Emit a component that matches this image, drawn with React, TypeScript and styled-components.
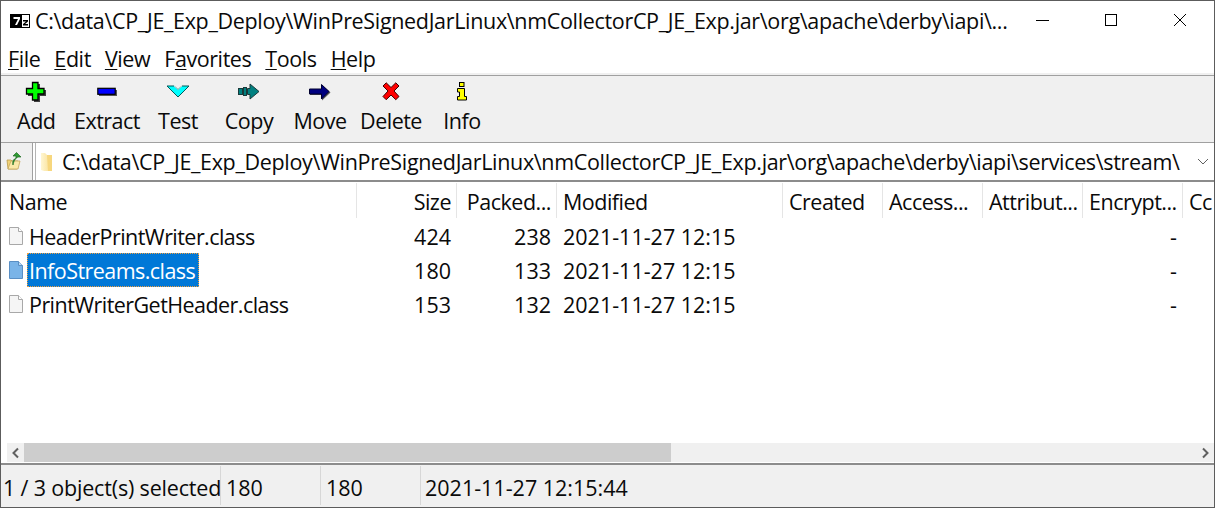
import React from "react";
import styled, { createGlobalStyle } from "styled-components";

const Global = createGlobalStyle`
  html, body { margin: 0; padding: 0; background: #fff; }
  body { font-family: "Open Sans", "Noto Sans", sans-serif; font-size: 21.5px; color: #0a0a0a; overflow: hidden; }
`;

const Window = styled.div`
  width: 1215px; height: 508px; box-sizing: border-box; overflow: hidden;
  border: 1px solid #5c5c5c;
  display: flex; flex-direction: column; background: #fff;
  letter-spacing: -0.33px;
`;
const TitleBar = styled.div`
  height: 39px; flex: none; display: flex; align-items: center; padding-left: 9px;
`;
const TitleText = styled.div`
  flex: 1; margin-left: 5px; white-space: nowrap; overflow: hidden; line-height: 26px; padding-top: 1px;
`;
const WinButton = styled.div`
  width: 69px; height: 39px; display: flex; align-items: flex-start; justify-content: center; padding-top: 12px; box-sizing: border-box;
`;
const MenuBar = styled.div`
  height: 33px; flex: none; display: flex; align-items: center; padding-left: 7px; gap: 14px; padding-top: 4px; box-sizing: border-box; letter-spacing: -0.42px;
`;
const MenuItem = styled.span`
  line-height: 26px; white-space: nowrap;
  u { text-underline-offset: 2px; text-decoration-thickness: 1px; }
`;
const Strip = styled.div`
  height: 2px; flex: none; background: #f0f0f0; border-bottom: 1px solid #a0a0a0;
`;
const Toolbar = styled.div`
  height: 66px; flex: none; background: #f0f0f0; border-bottom: 1px solid #a0a0a0; display: flex;
`;
const ToolButton = styled.div`
  width: 71px; display: flex; flex-direction: column; align-items: center; padding-top: 5px; box-sizing: border-box;
  &:first-child { width: 70.5px; }
`;
const ToolIcon = styled.div`
  height: 22px; display: flex; align-items: center; justify-content: center;
`;
const ToolLabel = styled.div`
  line-height: 26px; margin-top: 5px; white-space: nowrap; letter-spacing: -0.5px;
`;
const AddressBar = styled.div`
  height: 37px; flex: none; display: flex; background: #fff; border-bottom: 2px solid #8c8c8c;
`;
const UpButton = styled.div`
  width: 32px; flex: none; background: #f0f0f0; border-right: 1px solid #a0a0a0; box-sizing: border-box;
  display: flex; align-items: center; padding-left: 5px; height: 37px;
`;
const AddressField = styled.div`
  flex: 1; display: flex; align-items: center; min-width: 0; margin-left: 2px; border-left: 1px solid #b4b4b4; padding-left: 4px;
`;
const AddressText = styled.div`
  margin-left: 9px; white-space: nowrap; line-height: 26px; flex: 1; padding-top: 1px;
`;
const ComboArrow = styled.div`
  width: 24px; flex: none; display: flex; justify-content: center; margin-right: -1px;
`;
const List = styled.div`
  flex: 1; min-height: 0; display: flex; flex-direction: column; overflow: hidden;
`;
const COLS = "356px 100px 100px 226px 100px 100px 100px 100px 100px";
const HeaderRow = styled.div`
  display: grid; grid-template-columns: ${COLS}; height: 36px; flex: none; width: 1300px; padding-top: 1px; box-sizing: border-box;
`;
const HeaderCell = styled.div<{ $right?: boolean }>`
  border-right: 1px solid #e5e5e5; box-sizing: border-box; white-space: nowrap; overflow: hidden; line-height: 37px;
  padding: 0 5px 0 6px; height: 35px; letter-spacing: -0.5px;
  text-align: ${(p) => (p.$right ? "right" : "left")};
  &:first-child { padding-left: 8px; }
`;
const Rows = styled.div`
  flex: 1; padding-top: 1px; min-height: 0;
`;
const Row = styled.div`
  display: grid; grid-template-columns: ${COLS}; height: 34px; width: 1300px; align-items: center; white-space: nowrap;
`;
const NameCell = styled.div`
  display: flex; align-items: center; padding-left: 7px;
`;
const FileName = styled.span<{ $selected?: boolean }>`
  margin-left: 3px; height: 34px; line-height: 35px; box-sizing: border-box; padding: 0 4px 0 2px; letter-spacing: -0.55px;
  background: ${(p) => (p.$selected ? "#0078d7" : "transparent")};
  color: ${(p) => (p.$selected ? "#fff" : "#0a0a0a")};
  outline: ${(p) => (p.$selected ? "1px dotted #f0a040" : "none")};
  outline-offset: -1px;
`;
const Cell = styled.div<{ $right?: boolean }>`
  padding: 0 6px; letter-spacing: 0; text-align: ${(p) => (p.$right ? "right" : "left")}; box-sizing: border-box; line-height: 35px; height: 34px;
`;
const ScrollBar = styled.div`
  height: 19px; flex: none; display: flex; background: #f0f0f0; margin-left: 6px; margin-bottom: 1px;
`;
const ScrollButton = styled.div`
  width: 17px; flex: none; display: flex; align-items: center; justify-content: center;
`;
const ScrollTrack = styled.div`
  flex: 1; min-width: 0; display: flex;
`;
const ScrollThumb = styled.div`
  width: 647px; background: #cdcdcd;
`;
const StatusBar = styled.div`
  height: 44px; flex: none; display: flex; background: #f0f0f0; border-top: 2px solid #8c8c8c; box-sizing: border-box;
`;
const StatusPane = styled.div<{ $w: number }>`
  width: ${(p) => p.$w}px; flex: none; box-sizing: border-box; border-right: 1px solid #d7d7d7; margin-top: 1px; height: 39px; letter-spacing: 0;
  padding-left: 5px; line-height: 43px; white-space: nowrap; overflow: hidden;
  &:first-child { padding-left: 2px; letter-spacing: -0.17px; }
  &:last-child { border-right: 0; padding-left: 4px; }
`;

const AddIcon = () => (
  <svg width="22" height="22" viewBox="0 0 22 22">
    <path d="M9 3h6v6h6v6h-6v6H9v-6H3V9h6z" fill="#404040" />
    <path d="M7.500 1.500h5.500v6h6v5.500h-6v6H7.500v-6h-6V7.500h6z" fill="#00ff00" stroke="#000" strokeWidth="1.3" />
  </svg>
);
const ExtractIcon = () => (
  <svg width="20" height="22" viewBox="0 0 20 22">
    <rect x="2" y="9" width="18" height="6" fill="#555" />
    <rect x="0.800" y="7.300" width="17.400" height="6" fill="#0000ff" stroke="#000" strokeWidth="1.2" />
  </svg>
);
const TestIcon = () => (
  <svg width="24" height="22" viewBox="0 0 24 22">
    <path d="M1 5h7l4 3.500L16 5h7l-11 11z" fill="#00ffff" stroke="#005a5a" strokeWidth="1" />
    <path d="M8 5l4 3.500L16 5" fill="none" stroke="#e0ffff" strokeWidth="0.8" />
  </svg>
);
const CopyIcon = () => (
  <svg width="22" height="22" viewBox="0 0 22 22">
    <rect x="0.500" y="7.500" width="4" height="6" fill="#008080" stroke="#1a3a3a" />
    <rect x="5.500" y="6.500" width="3" height="8" fill="#008080" stroke="#1a3a3a" />
    <path d="M9.500 7.500h2.500V3l9 7.500-9 7.500v-4.500H9.500z" fill="#008080" stroke="#1a3a3a" />
  </svg>
);
const MoveIcon = () => (
  <svg width="22" height="22" viewBox="0 0 22 22">
    <path d="M1 9h12V4l8.500 7.500-8.500 8v-5.500H1z" fill="#555" />
    <path d="M0.500 8h12V3.500L20 10.500l-7.500 7.500v-5h-12z" fill="#000080" stroke="#000030" />
  </svg>
);
const DeleteIcon = () => (
  <svg width="20" height="22" viewBox="0 0 20 22">
    <path d="M2 5l3.200-3.200L10 6.500l4.800-4.700L18 5l-5 5 5 5.500-3.200 3.200L10 14l-4.800 4.700L2 15.500 7 10z" fill="#ff0000" stroke="#400000" strokeWidth="1" />
  </svg>
);
const InfoIcon = () => (
  <svg width="12" height="22" viewBox="0 0 12 22">
    <rect x="3.500" y="1.500" width="4.500" height="4" fill="#ffff00" stroke="#000" />
    <path d="M1.500 7.500h7v8h2v3.500h-9v-3.500h2v-4.500h-2z" fill="#ffff00" stroke="#000" />
  </svg>
);
const LogoIcon = () => (
  <svg width="20" height="14" viewBox="0 0 20 14">
    <rect x="0" y="0" width="20" height="14" fill="#000" />
    <rect x="1" y="1" width="18" height="12" fill="#fff" />
    <rect x="1" y="1" width="11" height="12" fill="#000" />
    <path d="M3.500 3h6.500v2l-3 6H5l3-6H3.500z" fill="#fff" />
    <path d="M13 6h5v1.500l-3 2.500h3v1.500h-5V10l3-2.500h-3z" fill="#000" />
  </svg>
);
const UpIcon = () => (
  <svg width="16" height="19" viewBox="0 0 16 19">
    <path d="M1 8h4l1 1h6l-1 8H2z" fill="#f2d377" stroke="#b99a4a" strokeWidth="0.8" />
    <path d="M3 14l2-5h9l-2 8H2z" fill="#fbe9a9" stroke="#c6a75a" strokeWidth="0.8" />
    <path d="M7 13c-1-4 1-6 3-7V4l-3 0L10.500 0.500 15 5h-3c-2 1-4 3-5 8z" fill="#2f9a33" stroke="#1c6b20" strokeWidth="0.7" />
  </svg>
);
const FolderIcon = () => (
  <svg width="13" height="20" viewBox="0 0 13 20">
    <defs>
      <linearGradient id="fg" x1="0" x2="1" y1="0" y2="0">
        <stop offset="0" stopColor="#fff6d2" />
        <stop offset="1" stopColor="#f8dc8c" />
      </linearGradient>
    </defs>
    <path d="M1 1h4l2 2h5v16H4l-3-1z" fill="url(#fg)" />
    <path d="M7 3h5v16H8z" fill="#f7d77e" />
  </svg>
);
const FileIcon = ({ selected }: { selected?: boolean }) => (
  <svg width="16" height="20" viewBox="0 0 16 20" style={{ flex: "none" }}>
    <path d="M1.500 1.500h9l4 4v13h-13z" fill={selected ? "#7ab4e8" : "#f5f5f5"} stroke={selected ? "#5a8fc4" : "#a8a8a8"} />
    <path d="M10.500 1.500v4h4" fill={selected ? "#bcd9f3" : "#fff"} stroke={selected ? "#5a8fc4" : "#a8a8a8"} />
  </svg>
);
const Chevron = ({ left }: { left?: boolean }) => (
  <svg width="9" height="12" viewBox="0 0 9 12">
    <path d={left ? "M7 1.500L2.500 6 7 10.500" : "M2 1.500L6.500 6 2 10.500"} fill="none" stroke="#606060" strokeWidth="2" />
  </svg>
);

const menus: [string, string, string][] = [
  ["", "F", "ile"],
  ["", "E", "dit"],
  ["", "V", "iew"],
  ["F", "a", "vorites"],
  ["", "T", "ools"],
  ["", "H", "elp"],
];
const tools: [string, React.ReactNode][] = [
  ["Add", <AddIcon />],
  ["Extract", <ExtractIcon />],
  ["Test", <TestIcon />],
  ["Copy", <CopyIcon />],
  ["Move", <MoveIcon />],
  ["Delete", <DeleteIcon />],
  ["Info", <InfoIcon />],
];
const headers: [string, boolean][] = [
  ["Name", false], ["Size", true], ["Packed...", true], ["Modified", false], ["Created", false],
  ["Access...", false], ["Attribut...", false], ["Encrypt...", false], ["Cc", false],
];
const files = [
  { name: "HeaderPrintWriter.class", size: "424", packed: "238" },
  { name: "InfoStreams.class", size: "180", packed: "133", selected: true },
  { name: "PrintWriterGetHeader.class", size: "153", packed: "132" },
];

export default function App() {
  return (
    <Window>
      <Global />
      <TitleBar>
        <LogoIcon />
        <TitleText>C:\data\CP_JE_Exp_Deploy\WinPreSignedJarLinux\nmCollectorCP_JE_Exp.jar\org\apache\derby\iapi\...</TitleText>
        <WinButton>
          <svg width="14" height="14" viewBox="0 0 14 14"><path d="M1 7.500h13" stroke="#000" /></svg>
        </WinButton>
        <WinButton>
          <svg width="14" height="14" viewBox="0 0 14 14"><rect x="1.500" y="1.500" width="11" height="11" fill="none" stroke="#000" /></svg>
        </WinButton>
        <WinButton>
          <svg width="14" height="14" viewBox="0 0 14 14"><path d="M1 1l12 12M13 1L1 13" stroke="#000" /></svg>
        </WinButton>
      </TitleBar>
      <MenuBar>
        {menus.map(([a, b, c]) => (
          <MenuItem key={a + b + c}>{a}<u>{b}</u>{c}</MenuItem>
        ))}
      </MenuBar>
      <Strip />
      <Toolbar>
        {tools.map(([label, icon]) => (
          <ToolButton key={label}>
            <ToolIcon>{icon}</ToolIcon>
            <ToolLabel>{label}</ToolLabel>
          </ToolButton>
        ))}
      </Toolbar>
      <AddressBar>
        <UpButton><UpIcon /></UpButton>
        <AddressField>
          <FolderIcon />
          <AddressText>C:\data\CP_JE_Exp_Deploy\WinPreSignedJarLinux\nmCollectorCP_JE_Exp.jar\org\apache\derby\iapi\services\stream\</AddressText>
          <ComboArrow>
            <svg width="12" height="8" viewBox="0 0 12 8"><path d="M1 1l5 5 5-5" fill="none" stroke="#606060" /></svg>
          </ComboArrow>
        </AddressField>
      </AddressBar>
      <List>
        <HeaderRow>
          {headers.map(([h, r]) => (
            <HeaderCell key={h} $right={r}>{h}</HeaderCell>
          ))}
        </HeaderRow>
        <Rows>
          {files.map((f) => (
            <Row key={f.name}>
              <NameCell>
                <FileIcon selected={f.selected} />
                <FileName $selected={f.selected}>{f.name}</FileName>
              </NameCell>
              <Cell $right>{f.size}</Cell>
              <Cell $right>{f.packed}</Cell>
              <Cell>2021-11-27 12:15</Cell>
              <Cell />
              <Cell />
              <Cell />
              <Cell $right>-</Cell>
              <Cell />
            </Row>
          ))}
        </Rows>
        <ScrollBar>
          <ScrollButton><Chevron left /></ScrollButton>
          <ScrollTrack><ScrollThumb /></ScrollTrack>
          <ScrollButton><Chevron /></ScrollButton>
        </ScrollBar>
      </List>
      <StatusBar>
        <StatusPane $w={220}>1 / 3 object(s) selected</StatusPane>
        <StatusPane $w={100}>180</StatusPane>
        <StatusPane $w={100}>180</StatusPane>
        <StatusPane $w={400}>2021-11-27 12:15:44</StatusPane>
      </StatusBar>
    </Window>
  );
}
